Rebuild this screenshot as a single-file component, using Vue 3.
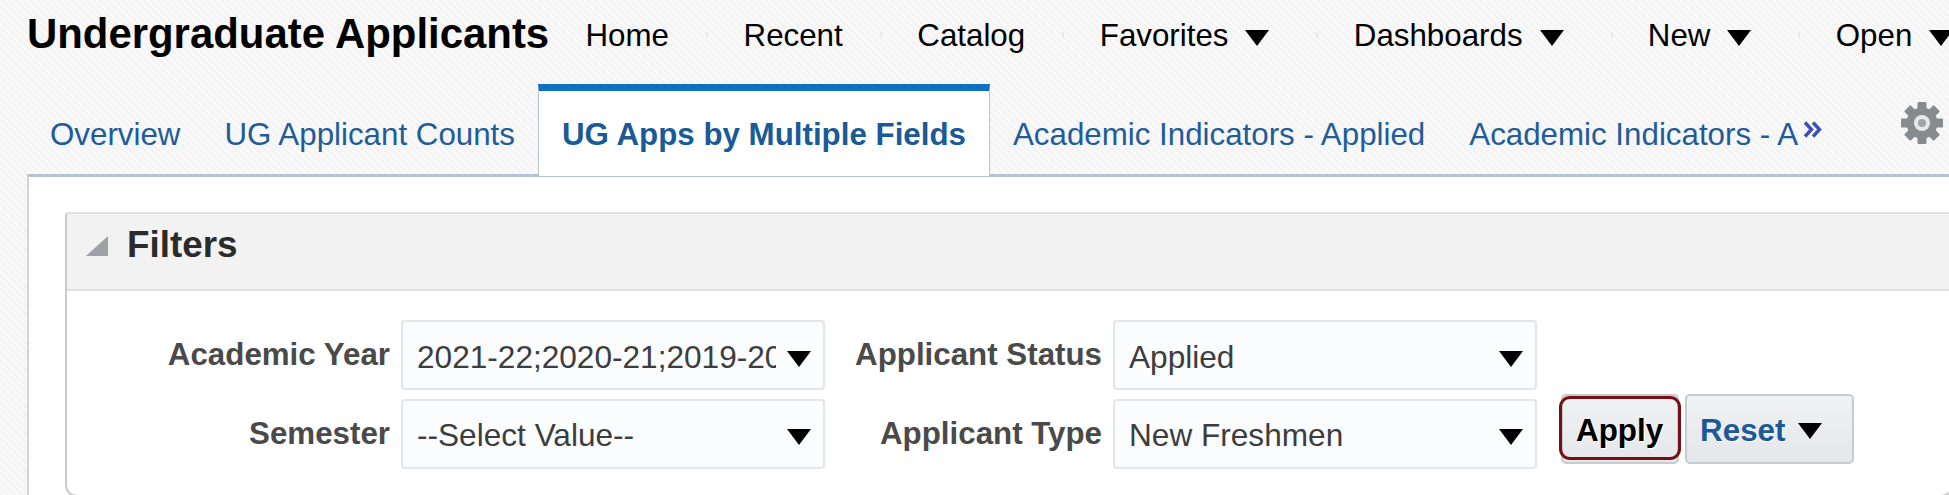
<script setup>
const navItems = [
  { label: 'Home' },
  { label: 'Recent' },
  { label: 'Catalog' },
  { label: 'Favorites', menu: true },
  { label: 'Dashboards', menu: true },
  { label: 'New', menu: true },
  { label: 'Open', menu: true }
]

const tabs = [
  { label: 'Overview' },
  { label: 'UG Applicant Counts' },
  { label: 'UG Apps by Multiple Fields', active: true },
  { label: 'Academic Indicators - Applied' },
  { label: 'Academic Indicators - A' }
]

const gearTeeth = [0, 45, 90, 135, 180, 225, 270, 315]
</script>

<template>
  <div class="page">
    <header class="topbar">
      <h1 class="title">Undergraduate Applicants</h1>
      <nav class="nav">
        <a v-for="item in navItems" :key="item.label" class="nav-item" :class="{ 'has-menu': item.menu }">
          {{ item.label }}<span v-if="item.menu" class="arrow"></span>
        </a>
      </nav>
    </header>

    <div class="tabs">
      <a v-for="tab in tabs" :key="tab.label" class="tab" :class="{ active: tab.active }">{{ tab.label }}</a>
      <svg class="more" viewBox="0 0 20 17" width="20" height="17">
        <path d="M2 1.5 L8.5 8.5 L2 15.5 M10 1.5 L16.5 8.5 L10 15.5" fill="none" stroke="#3a50b4" stroke-width="3.4" />
      </svg>
      <svg class="gear" viewBox="-21 -21 42 42" width="42" height="42">
        <rect v-for="deg in gearTeeth" :key="deg" x="-4.5" y="-21" width="9" height="10" rx="1" fill="#868b90" :transform="`rotate(${deg})`" />
        <circle r="15.5" fill="#868b90" />
        <circle r="8" fill="#e6e7e8" />
        <circle r="4" fill="#a0a4a8" />
      </svg>
    </div>

    <main class="panel">
      <section class="filters">
        <div class="filters-head">
          <svg class="collapse" viewBox="0 0 22 20" width="22" height="20">
            <polygon points="22,0 22,20 0,20" fill="#9ea2a6" />
          </svg>
          <h2>Filters</h2>
        </div>
        <div class="filters-body">
          <label class="field-label">Academic Year</label>
          <div class="select"><span class="value">2021-22;2020-21;2019-20</span><span class="arrow"></span></div>
          <label class="field-label">Applicant Status</label>
          <div class="select"><span class="value">Applied</span><span class="arrow"></span></div>
          <div></div>

          <label class="field-label">Semester</label>
          <div class="select"><span class="value">--Select Value--</span><span class="arrow"></span></div>
          <label class="field-label">Applicant Type</label>
          <div class="select"><span class="value">New Freshmen</span><span class="arrow"></span></div>
          <div class="buttons">
            <button class="btn apply">Apply<span class="focus-ring"></span></button>
            <button class="btn reset">Reset<span class="arrow"></span></button>
          </div>
        </div>
      </section>
    </main>
  </div>
</template>

<style>
html, body {
  margin: 0;
  overflow: hidden;
}
</style>

<style scoped>
.page {
  width: 1949px;
  height: 495px;
  overflow: hidden;
  font-family: "Liberation Sans", Arial, sans-serif;
  background: repeating-linear-gradient(45deg, #f4f4f4 0, #f4f4f4 2px, #fafafa 3px, #fafafa 4px, #f4f4f4 5px);
}

.arrow {
  display: inline-block;
  width: 0;
  height: 0;
  border-left: 12px solid transparent;
  border-right: 12px solid transparent;
  border-top: 16px solid #000;
  filter: blur(0.5px);
}

/* top bar */
.topbar {
  display: flex;
  align-items: flex-start;
  height: 84px;
  white-space: nowrap;
}

.title {
  margin: 10px 0 0 27px;
  font-size: 41.9px;
  line-height: 48px;
  font-weight: 700;
  color: #000;
}

.nav {
  display: flex;
  margin-left: -1px;
  padding-top: 18px;
}

.nav-item {
  position: relative;
  display: flex;
  align-items: center;
  padding: 0 37.3px;
  font-size: 31.3px;
  line-height: 36px;
  color: #000;
}

.nav-item + .nav-item::before {
  content: "";
  position: absolute;
  left: 0;
  top: 14px;
  width: 2px;
  height: 6px;
  background: #e9e9e9;
}

.nav-item.has-menu {
  padding-right: 47px;
}

.nav-item .arrow {
  margin-left: 17px;
  margin-top: 3px;
}

/* tabs */
.tabs {
  display: flex;
  align-items: flex-end;
  height: 90px;
  padding-left: 28px;
  white-space: nowrap;
}

.tab {
  padding: 0 22px 21px;
  font-size: 31.3px;
  line-height: 36px;
  color: #1f5c99;
}

.tab:last-of-type {
  padding-right: 0;
}

.tab.active {
  position: relative;
  z-index: 1;
  margin: 0 1px -2px;
  padding: 26px 23px 23px;
  border-top: 7px solid #0f6fc0;
  border-left: 1px solid #b4c3d0;
  border-right: 1px solid #b4c3d0;
  background: #fff;
  font-weight: 700;
  color: #1a5a96;
}

.more {
  align-self: flex-end;
  margin: 0 0 36px 5px;
}

.gear {
  margin: 0 0 30px 78px;
}

/* panel */
.panel {
  margin-left: 27px;
  height: 321px;
  padding: 35px 0 0 36px;
  box-sizing: border-box;
  background: #fff;
  border-top: 3px solid #b4c3d0;
  border-left: 2px solid #ced6dc;
}

.filters {
  height: 285px;
  margin-right: -4px;
  box-sizing: border-box;
  border: 2px solid #e0e1e2;
  border-left-color: #c8ccd0;
  border-bottom-color: #c8ccd0;
  border-radius: 3px 3px 12px 12px;
}

.filters-head {
  display: flex;
  align-items: flex-start;
  height: 77px;
  box-sizing: border-box;
  background: #f2f2f2;
  border-bottom: 2px solid #e0e1e2;
}

.collapse {
  margin: 22px 0 0 19px;
}

.filters-head h2 {
  margin: 11px 0 0 19px;
  font-size: 36.8px;
  line-height: 40px;
  font-weight: 700;
  color: #2b2b2b;
}

.filters-body {
  display: grid;
  grid-template-columns: 334px 424px 288px 424px auto;
  grid-auto-rows: 70px;
  row-gap: 8.5px;
  padding-top: 29px;
}

.field-label {
  align-self: center;
  padding-right: 11px;
  text-align: right;
  font-size: 31.3px;
  line-height: 36px;
  font-weight: 700;
  color: #4a4a4a;
}

.select {
  display: flex;
  align-items: center;
  box-sizing: border-box;
  padding-left: 14px;
  background: #fbfcfe;
  border: 2px solid #e3e6e9;
  border-radius: 4px;
  font-size: 31.6px;
  color: #3d3d3d;
}

.value {
  width: 359px;
  padding-top: 3px;
  line-height: 36px;
  overflow: hidden;
  white-space: nowrap;
}

.select .arrow {
  margin: 7px 0 0 11px;
}

.buttons {
  display: flex;
  gap: 6px;
  margin-top: -5px;
  padding-left: 24px;
}

.btn {
  position: relative;
  display: flex;
  align-items: center;
  height: 70px;
  box-sizing: border-box;
  padding: 5px 0 0 13px;
  background: linear-gradient(#f1f2f4, #e4e6e9);
  border: 2px solid #c6cbd0;
  border-radius: 5px;
  font-family: inherit;
  font-size: 31.4px;
  line-height: 36px;
  font-weight: 700;
  text-shadow: 1px 1px 0 #fff;
}

.apply {
  width: 118px;
  color: #000;
}

.reset {
  width: 169px;
  color: #1c5a97;
}

.reset .arrow {
  margin: 0 0 0 12px;
}

.focus-ring {
  position: absolute;
  left: -4px;
  right: -4px;
  top: 0;
  bottom: 2px;
  border: 3px solid #7a0c14;
  border-radius: 11px;
}
</style>
